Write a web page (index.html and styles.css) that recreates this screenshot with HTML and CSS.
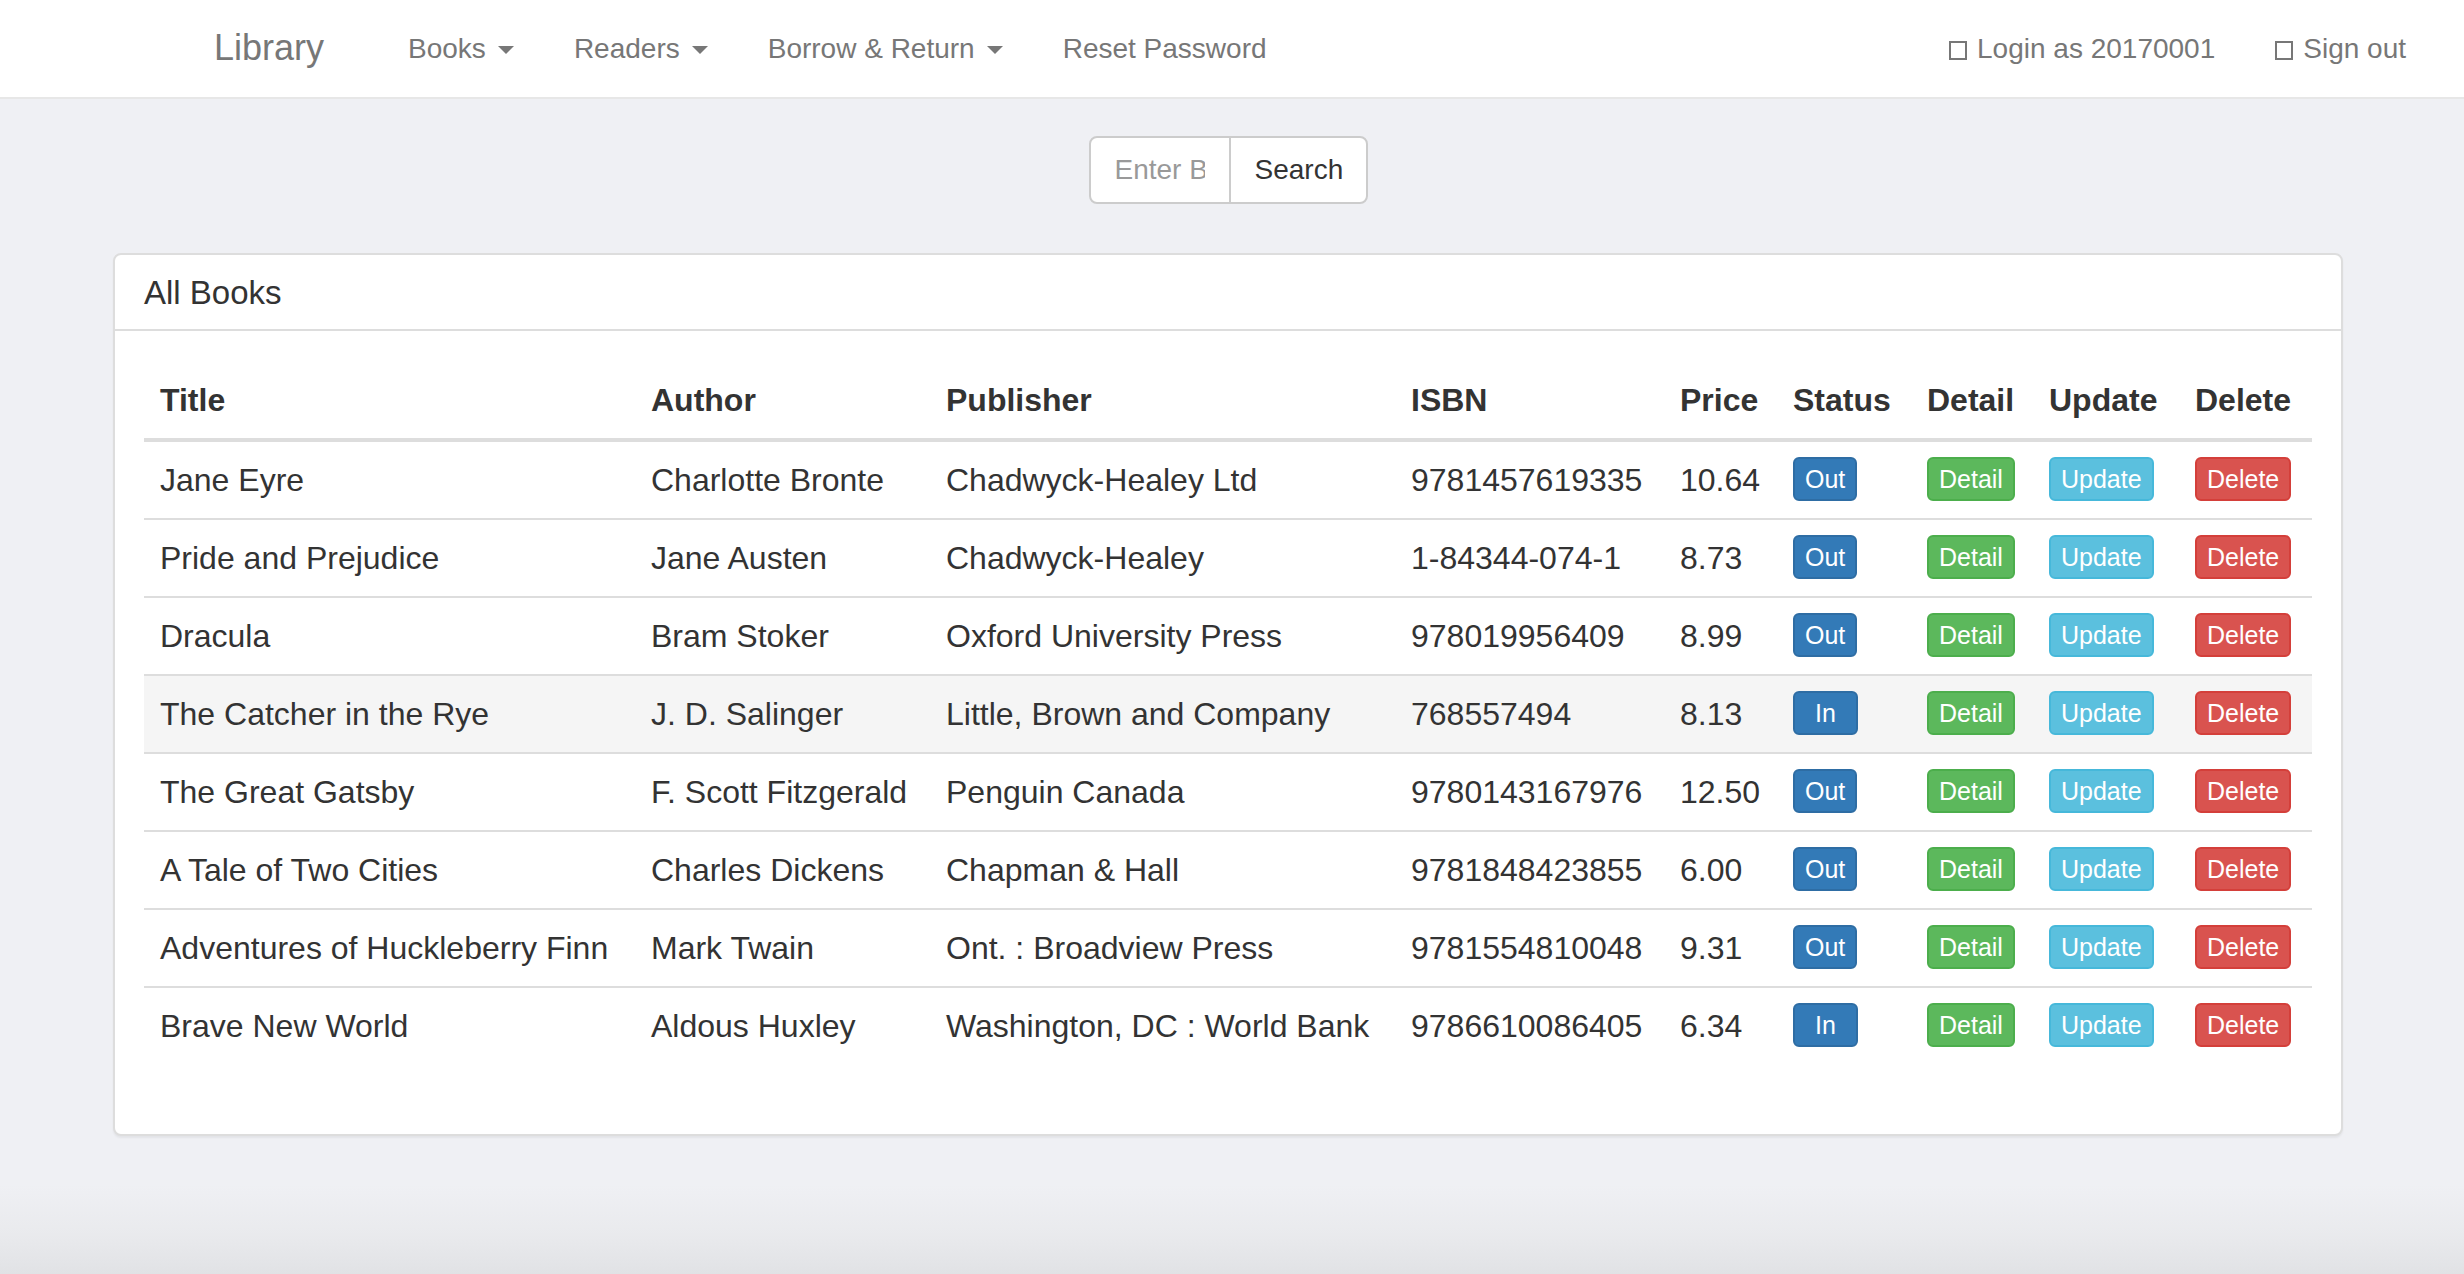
FILE: index.html
```html
<!DOCTYPE html>
<html lang="en">
<head>
<meta charset="utf-8">
<title>Library</title>
<link rel="stylesheet" href="styles.css">
</head>
<body>
<nav class="navbar">
  <a class="brand" href="#">Library</a>
  <ul class="nav">
    <li><a href="#">Books <span class="caret"></span></a></li>
    <li><a href="#">Readers <span class="caret"></span></a></li>
    <li><a href="#">Borrow &amp; Return <span class="caret"></span></a></li>
    <li><a href="#">Reset Password</a></li>
  </ul>
  <ul class="nav nav-right">
    <li><a href="#"><span class="glyph"></span>Login as 20170001</a></li>
    <li><a href="#"><span class="glyph"></span>Sign out</a></li>
  </ul>
</nav>

<form class="search">
  <div class="input-group">
    <input class="search-input" type="text" placeholder="Enter Book Name">
    <button class="search-btn" type="button">Search</button>
  </div>
</form>

<div class="panel">
  <div class="panel-heading">All Books</div>
  <div class="panel-body">
    <table class="books">
      <thead>
        <tr>
          <th>Title</th><th>Author</th><th>Publisher</th><th>ISBN</th><th>Price</th><th>Status</th><th>Detail</th><th>Update</th><th>Delete</th>
        </tr>
      </thead>
      <tbody>
        <tr>
          <td>Jane Eyre</td><td>Charlotte Bronte</td><td>Chadwyck-Healey Ltd</td><td>9781457619335</td><td>10.64</td>
          <td><span class="btn btn-primary">Out</span></td><td><span class="btn btn-success">Detail</span></td><td><span class="btn btn-info">Update</span></td><td><span class="btn btn-danger">Delete</span></td>
        </tr>
        <tr>
          <td>Pride and Prejudice</td><td>Jane Austen</td><td>Chadwyck-Healey</td><td>1-84344-074-1</td><td>8.73</td>
          <td><span class="btn btn-primary">Out</span></td><td><span class="btn btn-success">Detail</span></td><td><span class="btn btn-info">Update</span></td><td><span class="btn btn-danger">Delete</span></td>
        </tr>
        <tr>
          <td>Dracula</td><td>Bram Stoker</td><td>Oxford University Press</td><td>978019956409</td><td>8.99</td>
          <td><span class="btn btn-primary">Out</span></td><td><span class="btn btn-success">Detail</span></td><td><span class="btn btn-info">Update</span></td><td><span class="btn btn-danger">Delete</span></td>
        </tr>
        <tr class="hover">
          <td>The Catcher in the Rye</td><td>J. D. Salinger</td><td>Little, Brown and Company</td><td>768557494</td><td>8.13</td>
          <td><span class="btn btn-primary btn-in">In</span></td><td><span class="btn btn-success">Detail</span></td><td><span class="btn btn-info">Update</span></td><td><span class="btn btn-danger">Delete</span></td>
        </tr>
        <tr>
          <td>The Great Gatsby</td><td>F. Scott Fitzgerald</td><td>Penguin Canada</td><td>9780143167976</td><td>12.50</td>
          <td><span class="btn btn-primary">Out</span></td><td><span class="btn btn-success">Detail</span></td><td><span class="btn btn-info">Update</span></td><td><span class="btn btn-danger">Delete</span></td>
        </tr>
        <tr>
          <td>A Tale of Two Cities</td><td>Charles Dickens</td><td>Chapman &amp; Hall</td><td>9781848423855</td><td>6.00</td>
          <td><span class="btn btn-primary">Out</span></td><td><span class="btn btn-success">Detail</span></td><td><span class="btn btn-info">Update</span></td><td><span class="btn btn-danger">Delete</span></td>
        </tr>
        <tr>
          <td>Adventures of Huckleberry Finn</td><td>Mark Twain</td><td>Ont. : Broadview Press</td><td>9781554810048</td><td>9.31</td>
          <td><span class="btn btn-primary">Out</span></td><td><span class="btn btn-success">Detail</span></td><td><span class="btn btn-info">Update</span></td><td><span class="btn btn-danger">Delete</span></td>
        </tr>
        <tr>
          <td>Brave New World</td><td>Aldous Huxley</td><td>Washington, DC : World Bank</td><td>9786610086405</td><td>6.34</td>
          <td><span class="btn btn-primary btn-in">In</span></td><td><span class="btn btn-success">Detail</span></td><td><span class="btn btn-info">Update</span></td><td><span class="btn btn-danger">Delete</span></td>
        </tr>
      </tbody>
    </table>
  </div>
</div>
</body>
</html>
```
FILE: styles.css
```css
* { box-sizing: border-box; }

html, body {
  margin: 0;
  padding: 0;
}

body {
  min-height: 1274px;
  font-family: "Liberation Sans", Arial, sans-serif;
  color: #333;
  background: linear-gradient(to bottom, #eff0f4 0, #eff0f4 1185px, #e9eaed 1235px, #e1e2e5 1274px);
}

a { text-decoration: none; color: inherit; }

/* Navbar */
.navbar {
  height: 99px;
  background: #fff;
  border-bottom: 2px solid #e7e7e7;
  display: flex;
  align-items: center;
  padding: 0 28px 0 184px;
  color: #777;
}

.brand {
  font-size: 36px;
  line-height: 40px;
  padding: 0 30px;
  margin-top: -2px;
}

.nav {
  list-style: none;
  margin: 0 0 0 24px;
  padding: 0;
  display: flex;
  align-items: center;
}

.nav li a {
  display: flex;
  align-items: center;
  padding: 0 30px;
  font-size: 28px;
  line-height: 40px;
}

.nav-right {
  margin-left: auto;
}

.caret {
  display: inline-block;
  width: 0;
  height: 0;
  margin-left: 12px;
  border-top: 8px solid #777;
  border-left: 8px solid transparent;
  border-right: 8px solid transparent;
  margin-top: 2px;
}

.glyph {
  display: inline-block;
  width: 18px;
  height: 19px;
  border: 2px solid #777;
  margin-right: 10px;
  margin-top: 4px;
}

/* Search */
.search {
  display: flex;
  justify-content: center;
  margin: 37px 0 0 -8px;
}

.input-group {
  display: flex;
  height: 68px;
}

.search-input {
  width: 142px;
  height: 68px;
  border: 2px solid #ccc;
  border-radius: 8px 0 0 8px;
  padding: 0 24px;
  font-family: "Liberation Sans", Arial, sans-serif;
  font-size: 28px;
  color: #555;
  background: #fff;
  outline: none;
}

.search-input::placeholder {
  color: #999;
}

.search-btn {
  height: 68px;
  width: 139px;
  margin-left: -2px;
  border: 2px solid #ccc;
  border-radius: 0 8px 8px 0;
  background: #fff;
  color: #333;
  font-family: "Liberation Sans", Arial, sans-serif;
  font-size: 28px;
  padding: 0 24px;
}

/* Panel */
.panel {
  margin: 49px 0 0 113px;
  width: 2230px;
  background: #fff;
  border: 2px solid #ddd;
  border-radius: 8px;
  box-shadow: 0 2px 2px rgba(0, 0, 0, 0.05);
}

.panel-heading {
  padding: 20px 29px 18px;
  font-size: 33px;
  line-height: 36px;
  color: #333;
  border-bottom: 2px solid #ddd;
}

.panel-body {
  padding: 31px 29px 30px;
}

/* Table */
.books {
  width: 100%;
  table-layout: fixed;
  border-collapse: collapse;
  margin-bottom: 40px;
  font-size: 32px;
}

.books th,
.books td {
  padding: 16px;
  line-height: 44px;
  text-align: left;
  white-space: nowrap;
}

.books th {
  font-weight: bold;
  border-bottom: 4px solid #ddd;
  vertical-align: bottom;
}

.books td {
  border-top: 2px solid #ddd;
  vertical-align: top;
}

.books th:nth-child(1) { width: 491px; }
.books th:nth-child(2) { width: 295px; }
.books th:nth-child(3) { width: 465px; }
.books th:nth-child(4) { width: 269px; }
.books th:nth-child(5) { width: 113px; }
.books th:nth-child(6) { width: 134px; }
.books th:nth-child(7) { width: 122px; }
.books th:nth-child(8) { width: 146px; }
.books th:nth-child(9) { width: 133px; }

.books tr.hover td {
  background: #f5f5f5;
}

/* Buttons */
.btn {
  display: inline-block;
  vertical-align: top;
  height: 44px;
  padding: 0 10px;
  font-size: 25px;
  line-height: 40px;
  border: 2px solid transparent;
  border-radius: 6px;
  color: #fff;
  margin-top: -1px;
}

.btn-in {
  padding: 0 20px;
}

.btn-primary { background: #337ab7; border-color: #2e6da4; }
.btn-success { background: #5cb85c; border-color: #4cae4c; }
.btn-info { background: #5bc0de; border-color: #46b8da; }
.btn-danger { background: #d9534f; border-color: #d43f3a; }
```
